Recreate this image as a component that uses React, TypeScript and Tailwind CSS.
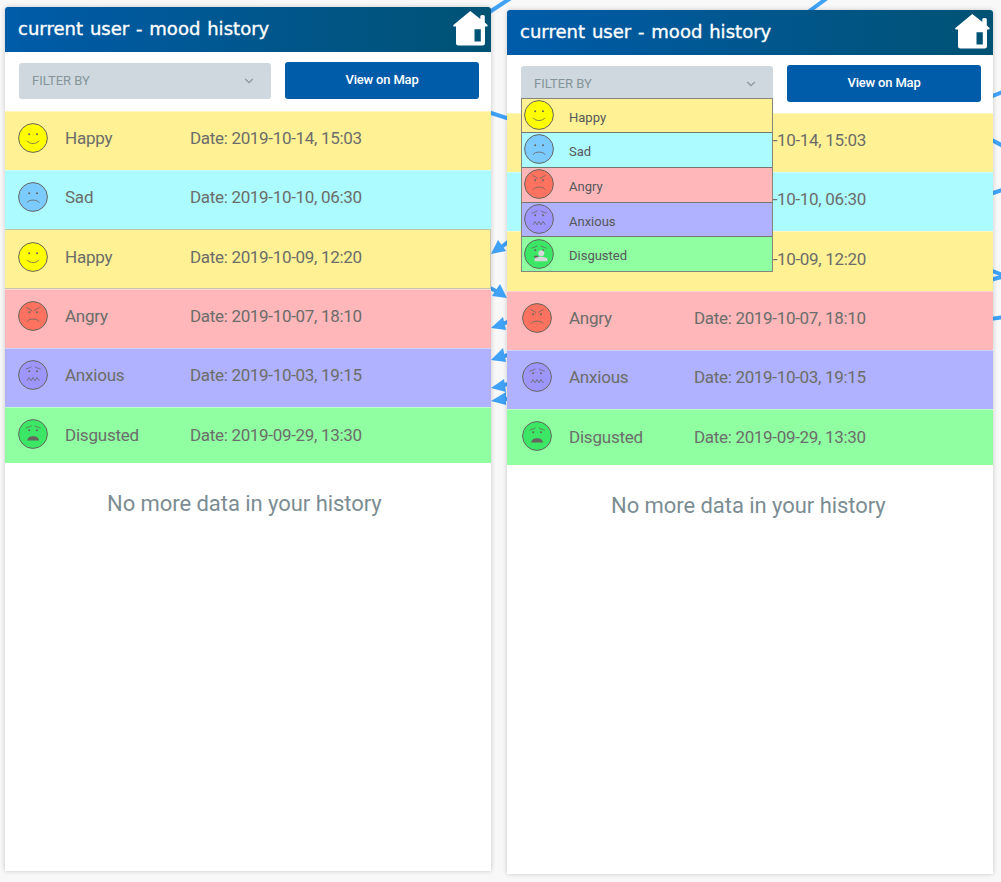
import React from 'react';

type Mood = 'Happy' | 'Sad' | 'Angry' | 'Anxious' | 'Disgusted';

const faceFill: Record<Mood, string> = {
  Happy: '#ffff00',
  Sad: '#7ccbff',
  Angry: '#ff725f',
  Anxious: '#9d96ff',
  Disgusted: '#3be765',
};

const rowColor: Record<Mood, string> = {
  Happy: 'bg-[#fff194]',
  Sad: 'bg-[#acfbff]',
  Angry: 'bg-[#ffb7b9]',
  Anxious: 'bg-[#b0b2ff]',
  Disgusted: 'bg-[#90ffa2]',
};

function Face({ mood, person = false }: { mood: Mood; person?: boolean }) {
  return (
    <svg viewBox="0 0 30 30" className="block size-[30px] shrink-0" fill="none" stroke="#66665f" strokeWidth="0.8">
      <circle cx="15" cy="15" r="14.4" fill={faceFill[mood]} strokeWidth="1" />
      <g fill="#66665f" stroke="none">
        <circle cx="11.2" cy="11.3" r="1" />
        <circle cx="19" cy="11.3" r="1" />
      </g>
      {mood === 'Happy' && <path d="M9 17.8C11.5 21.4 18.5 21.4 21 17.8" />}
      {(mood === 'Sad' || mood === 'Angry') && <path d="M9 20.8C10.5 17.2 19.5 17.2 21.3 20.8" />}
      {mood === 'Angry' && <path d="M8.5 6.6L10.5 7.4L14 9.6M21.6 6.6L19.6 7.4L16 9.6" />}
      {(mood === 'Anxious' || mood === 'Disgusted') && (
        <path d="M7.6 9.2C9 8.3 10 8.8 13.5 6.8M22.7 9.2C21 8.3 20.2 8.8 16.8 6.8" />
      )}
      {mood === 'Anxious' && <path d="M9 20.8L11 17.5L13 20.8L15 17.5L17 20.8L19 17.5L21.5 20.8" />}
      {mood === 'Disgusted' && !person && (
        <path d="M9.2 21.5C9.4 15.8 20.8 15.8 21 21.5Z" fill="#66665f" stroke="none" />
      )}
      {person && (
        <g fill="#d6d9d8" stroke="none">
          <path d="M9.5 17L13 16.5L16 19H11Z" fill="#66665f" />
          <circle cx="17.3" cy="14.3" r="3" />
          <path d="M10.5 22.2V20.6C10.5 16.9 23.5 16.9 23.5 20.6V22.2Z" />
        </g>
      )}
    </svg>
  );
}

function House() {
  return (
    <svg viewBox="0 0 35 35" className="block h-[35px] w-[35px]" fill="#fff">
      <path
        fillRule="evenodd"
        d="M17.3 0L27.3 8V5.5Q27.3 4 28.8 4H30.3Q31.8 4 31.8 5.5V11.4L34.3 13.7Q35 14.8 34.2 15.6H32V32Q32 34.5 29.5 34.5H5.5Q3 34.5 3 32V15.6H.8Q-.4 14.8.7 13.7ZM21.5 18.2V30.5H27.8V18.2Z"
      />
    </svg>
  );
}

interface Entry {
  mood: Mood;
  date: string;
  size: string;
  face: string;
  text: string;
}

const history: Entry[] = [
  { mood: 'Happy', date: '2019-10-14, 15:03', size: 'h-[59px]', face: 'mt-[11px]', text: 'mt-[14px]' },
  { mood: 'Sad', date: '2019-10-10, 06:30', size: 'h-[59px]', face: 'mt-[11px]', text: 'mt-[14px]' },
  { mood: 'Happy', date: '2019-10-09, 12:20', size: 'h-[60px]', face: 'mt-[12px]', text: 'mt-[15px]' },
  { mood: 'Angry', date: '2019-10-07, 18:10', size: 'h-[59px]', face: 'mt-[11px]', text: 'mt-[14px]' },
  { mood: 'Anxious', date: '2019-10-03, 19:15', size: 'h-[59px]', face: 'mt-[11px]', text: 'mt-[14px]' },
  { mood: 'Disgusted', date: '2019-09-29, 13:30', size: 'h-[56px]', face: 'mt-[11px]', text: 'mt-[15px]' },
];

const options: { mood: Mood; size: string }[] = [
  { mood: 'Happy', size: 'h-[34px]' },
  { mood: 'Sad', size: 'h-[35px]' },
  { mood: 'Angry', size: 'h-[35px]' },
  { mood: 'Anxious', size: 'h-[34px]' },
  { mood: 'Disgusted', size: 'h-[34px]' },
];

function Dropdown() {
  return (
    <div className="absolute top-[32px] left-0 w-[252px] border border-[#85857c]">
      {options.map(({ mood, size }, i) => (
        <div
          key={mood}
          className={`flex items-start pl-[2px] ${size} ${rowColor[mood]} ${i < 4 ? 'border-b border-[#77776f]' : ''}`}
        >
          <div className={mood === 'Disgusted' ? 'mt-[2px]' : 'mt-px'}>
            <Face mood={mood} person={mood === 'Disgusted'} />
          </div>
          <span className="mt-[9px] ml-[15px] text-[13px] leading-[20px] text-[#55585a]">{mood}</span>
        </div>
      ))}
    </div>
  );
}

function Row({ entry, covered, open, outlined }: { entry: Entry; covered: boolean; open: boolean; outlined: boolean }) {
  return (
    <li
      className={`flex items-start text-[17px] leading-[24px] text-[#6b6d6a] ${entry.size} ${rowColor[entry.mood]} ${open ? 'pl-[15px]' : 'pl-[13px]'} ${outlined ? 'border-y border-r border-[#c9c6a7]' : 'border-t border-white/40'}`}
    >
      {covered ? (
        <span className={`ml-[172px] w-[172px] text-right tracking-[-0.32px] ${entry.text}`}>{entry.date.slice(4)}</span>
      ) : (
        <>
          <div className={entry.face}>
            <Face mood={entry.mood} />
          </div>
          <span className={`ml-[17px] w-[125px] tracking-[-0.22px] ${entry.text}`}>{entry.mood}</span>
          <span className={`tracking-[-0.32px] ${entry.text}`}>Date: {entry.date}</span>
        </>
      )}
    </li>
  );
}

function Phone({ open = false }: { open?: boolean }) {
  return (
    <section className="relative h-[864px] w-[486px] shrink-0 rounded-t-[3px] bg-white shadow-[0_0_5px_rgba(0,0,0,0.2)]">
      <header className="flex h-[45px] items-start justify-between rounded-t-[3px] bg-linear-to-r from-[#005ba9] to-[#005274] pr-[3px] pl-[13px]">
        <h1 className="mt-[10px] font-['DejaVu_Sans',sans-serif] text-[18px] leading-[24px] tracking-[0.03px] [word-spacing:1px] whitespace-nowrap text-white [-webkit-text-stroke:0.35px_white]">
          current user - mood history
        </h1>
        <div className="mt-[4px]">
          <House />
        </div>
      </header>
      <div className={`flex items-start gap-[14px] pt-[10px] pl-[14px] ${open ? 'h-[58px]' : 'h-[59px]'}`}>
        <div className="relative mt-px">
          <div className="flex h-[36px] w-[252px] items-center justify-between rounded-[3px] bg-[#cfd8de] pr-[17px] pl-[13px] text-[#849599]">
            <span className="text-[13px]">FILTER BY</span>
            <svg viewBox="0 0 10 6" className="h-[6px] w-[10px]" fill="none" stroke="#87989c" strokeWidth="1.3">
              <path d="M1.2 1L5 4.7L8.8 1" />
            </svg>
          </div>
          {open && <Dropdown />}
        </div>
        <button className="h-[37px] w-[194px] rounded-[3px] bg-[#005ba9] pb-px text-[13px] font-medium tracking-[-0.18px] text-white">
          View on Map
        </button>
      </div>
      <ul>
        {history.map((entry, i) => (
          <Row key={entry.date} entry={entry} open={open} covered={open && i < 3} outlined={!open && i === 2} />
        ))}
      </ul>
      <p
        className={`mt-[26px] text-[22px] leading-[30px] tracking-[-0.05px] text-[#7b8d93] ${open ? 'pl-[104px]' : 'pl-[102px]'}`}
      >
        No more data in your history
      </p>
    </section>
  );
}

function Connectors() {
  return (
    <svg className="absolute inset-0" width="1001" height="882" fill="none" stroke="#3fa2f7" strokeWidth="4">
      <path d="M488 13L514 -4M804 15L830 -4M488 112L510 119M990 97L1005 91M990 139L1005 147M990 194L1005 189M990 270L1005 276M990 280L1005 276M990 319L1005 317M500 248L512 239M488 287L500 293M500 325L512 320M500 358L512 353M500 386L512 383M500 399L512 399" />
      <g fill="#3fa2f7" stroke="none">
        <path d="M491 254L498 240L506 251Z" />
        <path d="M507 298L492 296L500 284Z" />
        <path d="M491 328L503 317L506 330Z" />
        <path d="M491 360L503 348L506 362Z" />
        <path d="M491 388L504 379L506 392Z" />
        <path d="M491 401L506 392V405Z" />
      </g>
    </svg>
  );
}

export default function App() {
  return (
    <main className="relative h-[882px] w-[1001px] overflow-hidden bg-[#f8f8f8] font-[Roboto,sans-serif]">
      <Connectors />
      <div className="flex items-start gap-[16px] pt-[7px] pl-[5px]">
        <Phone />
        <div className="pt-[3px]">
          <Phone open />
        </div>
      </div>
    </main>
  );
}
